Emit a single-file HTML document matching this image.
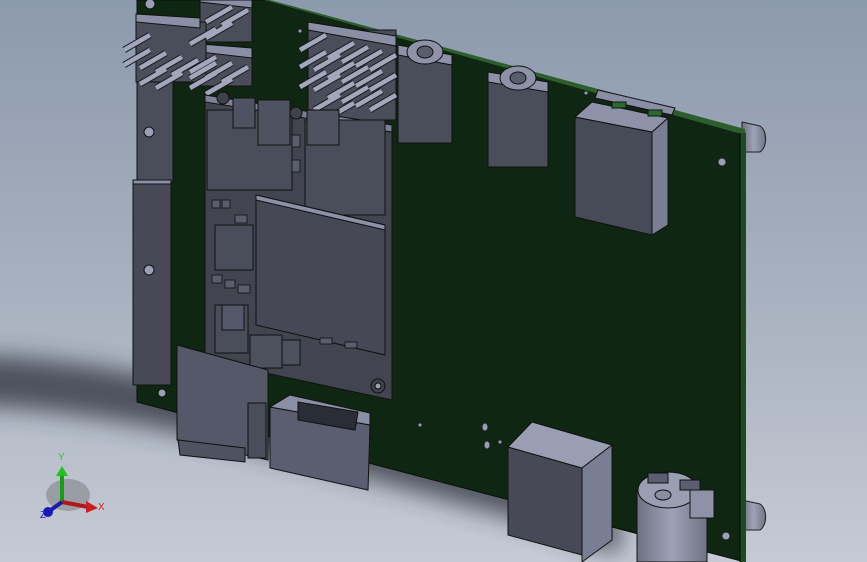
<!DOCTYPE html>
<html><head><meta charset="utf-8"><style>
html,body{margin:0;padding:0;width:867px;height:562px;overflow:hidden;background:#b4bcc8}
svg{display:block}
</style></head><body>
<svg width="867" height="562" viewBox="0 0 867 562" xmlns="http://www.w3.org/2000/svg" font-family="Liberation Sans, sans-serif">
<defs>
<linearGradient id="bg" x1="0" y1="0" x2="0" y2="1">
<stop offset="0" stop-color="#8c9aae"/><stop offset="0.55" stop-color="#a9b2c0"/><stop offset="1" stop-color="#c6cad4"/>
</linearGradient>
<filter id="bl" x="-20%" y="-50%" width="140%" height="200%"><feGaussianBlur stdDeviation="12"/></filter>
<linearGradient id="cyl" x1="0" y1="0" x2="1" y2="0"><stop offset="0" stop-color="#6d7184"/><stop offset="0.5" stop-color="#9ea2b6"/><stop offset="1" stop-color="#6f7386"/></linearGradient>
</defs>
<rect width="867" height="562" fill="url(#bg)"/>
<!-- shadow band -->
<path d="M-40 355 C 150 355, 350 430, 520 480 L 620 520 L 620 555 L 520 520 C 350 475, 150 410, -40 405 Z" fill="#353943" opacity="0.8" filter="url(#bl)"/>
<!-- standoffs right -->
<path d="M742 122 L760 126 A9 14 0 0 1 760 152 L742 152 Z" fill="url(#cyl)" stroke="#222" stroke-width="1"/>
<path d="M742 500 L760 504 A9 14 0 0 1 760 530 L742 530 Z" fill="url(#cyl)" stroke="#222" stroke-width="1"/>
<!-- board -->
<polygon points="137,0 264,0 745,133 745,562 137,402" fill="#0f2613" stroke="#081008"/>
<polygon points="264,0 270,0 745,129 745,135" fill="#2e5e2e"/>
<rect x="740" y="133" width="6" height="429" fill="#1f4a22"/>
<line x1="740" y1="133" x2="740" y2="562" stroke="#050a05"/>
<!-- holes -->
<g fill="#9aa0b4" stroke="#222">
<circle cx="722" cy="162" r="4"/><circle cx="726" cy="536" r="4"/><circle cx="586" cy="93" r="2"/><circle cx="300" cy="31" r="2"/>
<ellipse cx="485" cy="427" rx="3" ry="4"/><ellipse cx="500" cy="442" rx="2" ry="2"/><ellipse cx="420" cy="425" rx="2" ry="2"/><ellipse cx="487" cy="445" rx="3" ry="4"/>
</g>
<!-- left vertical headers -->
<g stroke="#111" stroke-width="1">
<rect x="137" y="70" width="36" height="112" fill="#4a4d5a"/>
<rect x="137" y="70" width="36" height="4" fill="#8b8fa5"/>
<rect x="133" y="180" width="38" height="205" fill="#474a56"/>
<rect x="133" y="180" width="38" height="4" fill="#8b8fa5"/>
<circle cx="149" cy="132" r="5" fill="#9aa0b4"/><circle cx="149" cy="270" r="5" fill="#9aa0b4"/><circle cx="162" cy="393" r="4" fill="#9aa0b4"/>
<circle cx="150" cy="4" r="5" fill="#9aa0b4"/>
<rect x="200" y="2" width="52" height="40" fill="#4a4d5a"/>
<polygon points="200,2 252,8 252,0 200,0" fill="#8b8fa5"/>
<rect x="200" y="52" width="52" height="34" fill="#4a4d5a"/>
<polygon points="200,52 252,58 252,48 200,44" fill="#8b8fa5"/>
<rect x="136" y="22" width="70" height="60" fill="#4a4d5a"/>
<polygon points="136,22 200,28 200,18 136,14" fill="#8b8fa5"/>
<rect x="308" y="30" width="88" height="90" fill="#4a4d5a"/>
<polygon points="308,30 396,46 396,36 308,22" fill="#8b8fa5"/>
</g>
<!-- pins -->
<g stroke="#1a1a22" stroke-width="6.5" stroke-linecap="butt">
<path d="M124 50 L150 35 M124 65 L150 50 M140 68 L166 53 M140 84 L166 69 M156 72 L182 57 M156 88 L182 73 M172 75 L198 60 M190 78 L216 63 M190 44 L216 29 M206 38 L232 23 M190 72 L216 57 M206 78 L232 63 M222 82 L248 67 M206 22 L232 7 M222 25 L248 10 M190 88 L216 73 M206 94 L232 79"/>
<path d="M300 50 L326 35 M300 67 L326 52 M300 87 L326 72 M314 70 L340 55 M314 90 L340 75 M328 58 L354 43 M328 78 L354 63 M328 98 L354 83 M342 62 L368 47 M342 82 L368 67 M342 102 L368 87 M356 66 L382 51 M356 86 L382 71 M356 106 L382 91 M370 70 L396 55 M370 90 L396 75 M370 110 L396 95 M314 110 L340 95 M328 118 L354 103"/>
</g>
<g stroke="#a3a7bc" stroke-width="4.5">
<path d="M124 50 L150 35 M124 65 L150 50 M140 68 L166 53 M140 84 L166 69 M156 72 L182 57 M156 88 L182 73 M172 75 L198 60 M190 78 L216 63 M190 44 L216 29 M206 38 L232 23 M190 72 L216 57 M206 78 L232 63 M222 82 L248 67 M206 22 L232 7 M222 25 L248 10 M190 88 L216 73 M206 94 L232 79"/>
<path d="M300 50 L326 35 M300 67 L326 52 M300 87 L326 72 M314 70 L340 55 M314 90 L340 75 M328 58 L354 43 M328 78 L354 63 M328 98 L354 83 M342 62 L368 47 M342 82 L368 67 M342 102 L368 87 M356 66 L382 51 M356 86 L382 71 M356 106 L382 91 M370 70 L396 55 M370 90 L396 75 M370 110 L396 95 M314 110 L340 95 M328 118 L354 103"/>
</g>
<!-- module -->
<g stroke="#111" stroke-width="1">
<polygon points="205,95 392,125 392,400 205,360" fill="#42454f"/>
<polygon points="205,95 392,125 392,132 205,102" fill="#7c8096"/>
<rect x="207" y="110" width="85" height="80" fill="#4a4d5a"/>
<rect x="258" y="100" width="32" height="45" fill="#4f5260"/>
<rect x="233" y="98" width="22" height="30" fill="#4f5260"/>
<rect x="305" y="120" width="80" height="95" fill="#4a4d5a"/>
<rect x="307" y="110" width="32" height="35" fill="#4f5260"/>
<polygon points="256,195 385,225 385,355 256,325" fill="#464955"/>
<polygon points="256,195 385,225 385,230 256,200" fill="#8d91a6"/>
<rect x="215" y="225" width="38" height="45" fill="#4a4d5a"/>
<rect x="215" y="305" width="33" height="48" fill="#4a4d5a"/>
<rect x="250" y="335" width="32" height="33" fill="#4d505d"/>
<rect x="282" y="340" width="18" height="25" fill="#4d505d"/>
<rect x="222" y="305" width="22" height="25" fill="#555868"/>
<circle cx="378" cy="386" r="7" fill="#3f424d"/><circle cx="378" cy="386" r="3" fill="#9aa0b4"/>
<circle cx="223" cy="98" r="6" fill="#3f424d"/><circle cx="296" cy="113" r="6" fill="#3f424d"/>
</g>
<g fill="#5a5d6c" stroke="#111" stroke-width="0.8">
<rect x="212" y="200" width="8" height="8"/><rect x="222" y="200" width="8" height="8"/><rect x="235" y="215" width="12" height="8"/><rect x="212" y="275" width="10" height="8"/><rect x="225" y="280" width="10" height="8"/><rect x="238" y="285" width="12" height="8"/><rect x="320" y="338" width="12" height="6"/><rect x="345" y="342" width="12" height="6"/><rect x="292" y="135" width="8" height="12"/><rect x="292" y="160" width="8" height="12"/>
</g>
<g stroke="#111" stroke-width="1">
<rect x="398" y="55" width="54" height="88" fill="#4a4d5a"/>
<polygon points="398,55 452,65 452,55 398,45" fill="#8e92a8"/>
<ellipse cx="425" cy="52" rx="18" ry="12" fill="#8e92a8"/><ellipse cx="425" cy="52" rx="8" ry="6" fill="#5a5d6c"/>
<rect x="488" y="82" width="60" height="85" fill="#4a4d5a"/>
<polygon points="488,82 548,92 548,82 488,72" fill="#8e92a8"/>
<ellipse cx="518" cy="78" rx="18" ry="12" fill="#8e92a8"/><ellipse cx="518" cy="78" rx="8" ry="6" fill="#5a5d6c"/>
<polygon points="575,117 652,132 652,235 575,217" fill="#474a57"/>
<polygon points="652,132 668,118 668,225 652,235" fill="#7a7e94"/>
<polygon points="575,117 592,102 668,118 652,132" fill="#8e92a8"/>
<polygon points="598,90 675,108 672,115 595,98" fill="#8a8ea4"/>
<rect x="612" y="102" width="14" height="6" fill="#2a6a30"/><rect x="648" y="110" width="14" height="6" fill="#2a6a30"/>
<polygon points="177,345 268,370 268,460 177,440" fill="#555868"/>
<polygon points="178,440 245,448 245,462 180,455" fill="#4f5260"/>
<rect x="248" y="403" width="18" height="55" fill="#4a4d5a"/>
<polygon points="270,407 370,425 368,490 270,468" fill="#5b5e70"/>
<polygon points="270,407 290,395 370,413 370,425" fill="#8b8fa5"/>
<polygon points="298,402 358,412 355,430 298,420" fill="#2a2c36"/>
<polygon points="508,447 582,468 582,555 508,535" fill="#474a56"/>
<polygon points="508,447 532,422 612,445 582,468" fill="#9a9eb3"/>
<polygon points="582,468 612,445 612,540 582,562" fill="#7a7e94"/>
<rect x="637" y="490" width="70" height="72" fill="url(#cyl)"/>
<ellipse cx="668" cy="490" rx="30" ry="18" fill="#9a9eb3"/>
<ellipse cx="663" cy="495" rx="8" ry="5" fill="#8a8ea4"/>
<rect x="648" y="473" width="20" height="10" fill="#5b5e70"/><rect x="680" y="480" width="20" height="10" fill="#5b5e70"/>
<rect x="690" y="490" width="24" height="28" fill="#8e92a8"/>
</g>
<g>
<ellipse cx="68" cy="495" rx="22" ry="16" fill="#555" opacity="0.35"/>
<line x1="62" y1="502" x2="62" y2="475" stroke="#1a9a1a" stroke-width="4"/>
<polygon points="56,476 68,476 62,466" fill="#22c022"/>
<line x1="62" y1="502" x2="88" y2="507" stroke="#b01818" stroke-width="4"/>
<polygon points="86,501 98,508 86,513" fill="#c82020"/>
<line x1="62" y1="502" x2="48" y2="512" stroke="#1a1aa0" stroke-width="4"/>
<circle cx="48" cy="512" r="5" fill="#1a1ab0"/>
<text x="58" y="460" font-size="10" fill="#20d020">Y</text>
<text x="98" y="510" font-size="10" fill="#e02020">X</text>
<text x="40" y="518" font-size="10" fill="#2020e0">Z</text>
</g>
</svg>
</body></html>
